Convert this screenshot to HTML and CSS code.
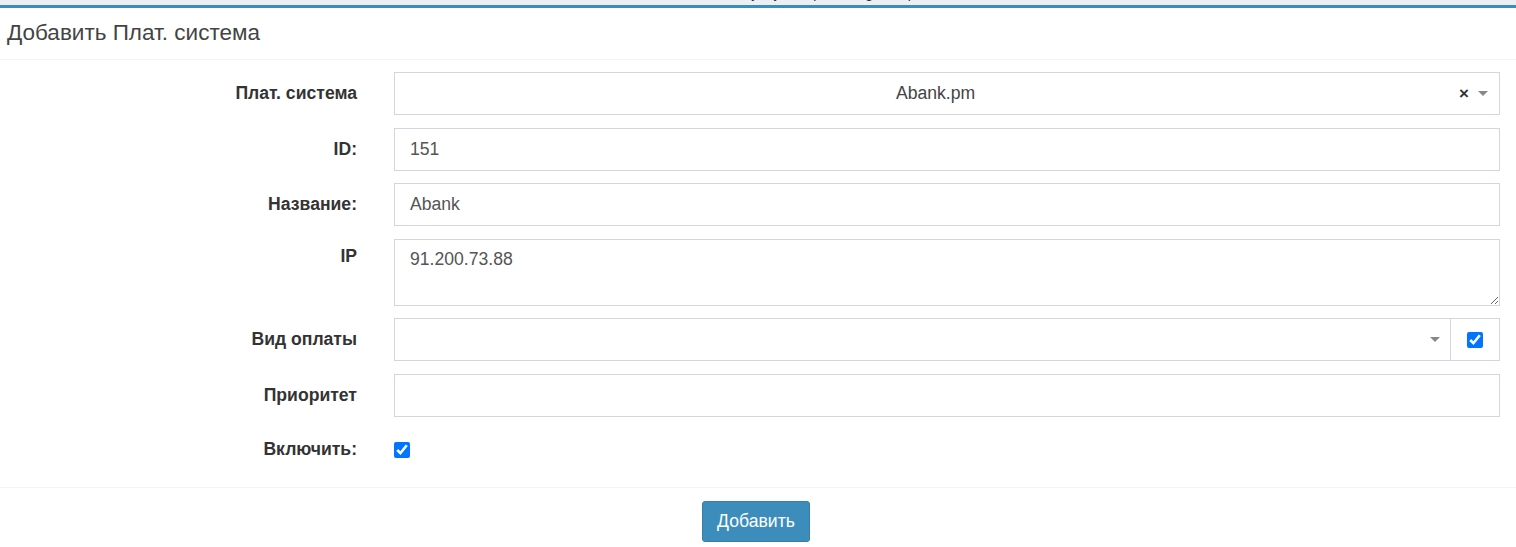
FILE: index.html
```html
<!DOCTYPE html>
<html lang="ru">
<head>
<meta charset="utf-8">
<title>Добавить Плат. система</title>
<link rel="stylesheet" href="styles.css">
</head>
<body>
<div class="topstrip"><span class="topline">Вот так у в у настройки log наш р</span></div>
<div class="box">
  <div class="box-header">
    <h3 class="box-title">Добавить Плат. система</h3>
  </div>
  <form class="box-body">
    <div class="form-row">
      <label class="lbl">Плат. система</label>
      <div class="select2">
        <span class="select2-text">Abank.pm</span>
        <span class="select2-clear">×</span>
        <span class="select2-arrow"></span>
      </div>
    </div>
    <div class="form-row">
      <label class="lbl">ID:</label>
      <input class="ctl" type="text" value="151">
    </div>
    <div class="form-row">
      <label class="lbl">Название:</label>
      <input class="ctl" type="text" value="Abank">
    </div>
    <div class="form-row top">
      <label class="lbl lbl-top">IP</label>
      <textarea class="ctl area">91.200.73.88</textarea>
    </div>
    <div class="form-row">
      <label class="lbl">Вид оплаты</label>
      <div class="input-group">
        <div class="select2 grow">
          <span class="select2-text"></span>
          <span class="select2-arrow"></span>
        </div>
        <span class="addon"><input class="chk" type="checkbox" checked></span>
      </div>
    </div>
    <div class="form-row">
      <label class="lbl">Приоритет</label>
      <input class="ctl" type="text" value="">
    </div>
    <div class="form-row chk-row">
      <label class="lbl">Включить:</label>
      <div><input class="chk" type="checkbox" checked></div>
    </div>
  </form>
  <div class="box-footer">
    <button class="btn" type="button">Добавить</button>
  </div>
</div>
</body>
</html>
```

FILE: styles.css
```css
* { box-sizing: border-box; }
html, body { margin: 0; padding: 0; }
body {
  background: #ffffff;
  font-family: "Liberation Sans", Arial, "Helvetica Neue", sans-serif;
  color: #333;
  font-size: 17.6px;
}
.topstrip {
  height: 5px;
  background: #ecf0f5;
  overflow: hidden;
  display: flex;
  justify-content: flex-start;
  align-items: flex-end;
  padding-left: 700px;
}
.topline {
  flex: none;
  line-height: 16px;
  height: 20px;
  font-size: 14px;
  color: #333;
}
.box {
  background: #fff;
  border-top: 3px solid #3c8dbc;
}
.box-header {
  border-bottom: 1px solid #f4f4f4;
  padding: 8px 7px 10px;
}
.box-title {
  margin: 0;
  font-weight: normal;
  font-size: 22.5px;
  line-height: 33px;
  color: #444;
}
.box-body {
  padding: 12px 16px 11px 0;
  display: flex;
  flex-direction: column;
  gap: 12.5px;
}
.form-row {
  display: grid;
  grid-template-columns: 357px 1fr;
  column-gap: 37px;
  align-items: center;
}
.form-row.top { align-items: start; }
.lbl {
  text-align: right;
  font-weight: bold;
  font-size: 17.6px;
  color: #333;
  padding-top: 0;
}
.lbl-top { padding-top: 7px; }
.ctl {
  display: block;
  width: 100%;
  height: 43px;
  border: 1px solid #d2d6de;
  border-radius: 0;
  padding: 6px 15px;
  font-family: inherit;
  font-size: 17.6px;
  color: #555;
  background: #fff;
  outline: none;
}
.area {
  height: 67px;
  padding-top: 8px;
  resize: vertical;
  line-height: 22px;
}
.select2 {
  height: 43px;
  border: 1px solid #d2d6de;
  display: flex;
  align-items: center;
  padding: 0 11px 0 15px;
  background: #fff;
}
.select2-text {
  flex: 1;
  text-align: center;
  font-size: 17.6px;
  color: #444;
  padding-left: 2px;
}
.select2-clear {
  font-weight: bold;
  font-size: 17px;
  color: #333;
  margin-right: 9px;
  line-height: 1;
}
.select2-arrow {
  width: 0;
  height: 0;
  border-style: solid;
  border-width: 5px 5px 0 5px;
  border-color: #888 transparent transparent transparent;
}
.input-group {
  display: flex;
}
.grow { flex: 1; padding-right: 10px; }
.addon {
  width: 49px;
  height: 43px;
  border: 1px solid #d2d6de;
  border-left: none;
  display: flex;
  align-items: center;
  justify-content: center;
  background: #fff;
}
.chk {
  width: 16px;
  height: 16px;
  margin: 0;
  accent-color: #0075ff;
  display: block;
}
.chk-row { padding-top: 10px; padding-bottom: 16px; }
.box-footer {
  border-top: 1px solid #f4f4f4;
  padding: 13px 0 5px;
  display: flex;
  justify-content: center;
}
.btn {
  width: 108px;
  height: 41px;
  background: #3c8dbc;
  border: 1px solid #367fa9;
  border-radius: 3px;
  color: #fff;
  font-family: inherit;
  font-size: 17.6px;
  margin-left: -4px;
}
```
